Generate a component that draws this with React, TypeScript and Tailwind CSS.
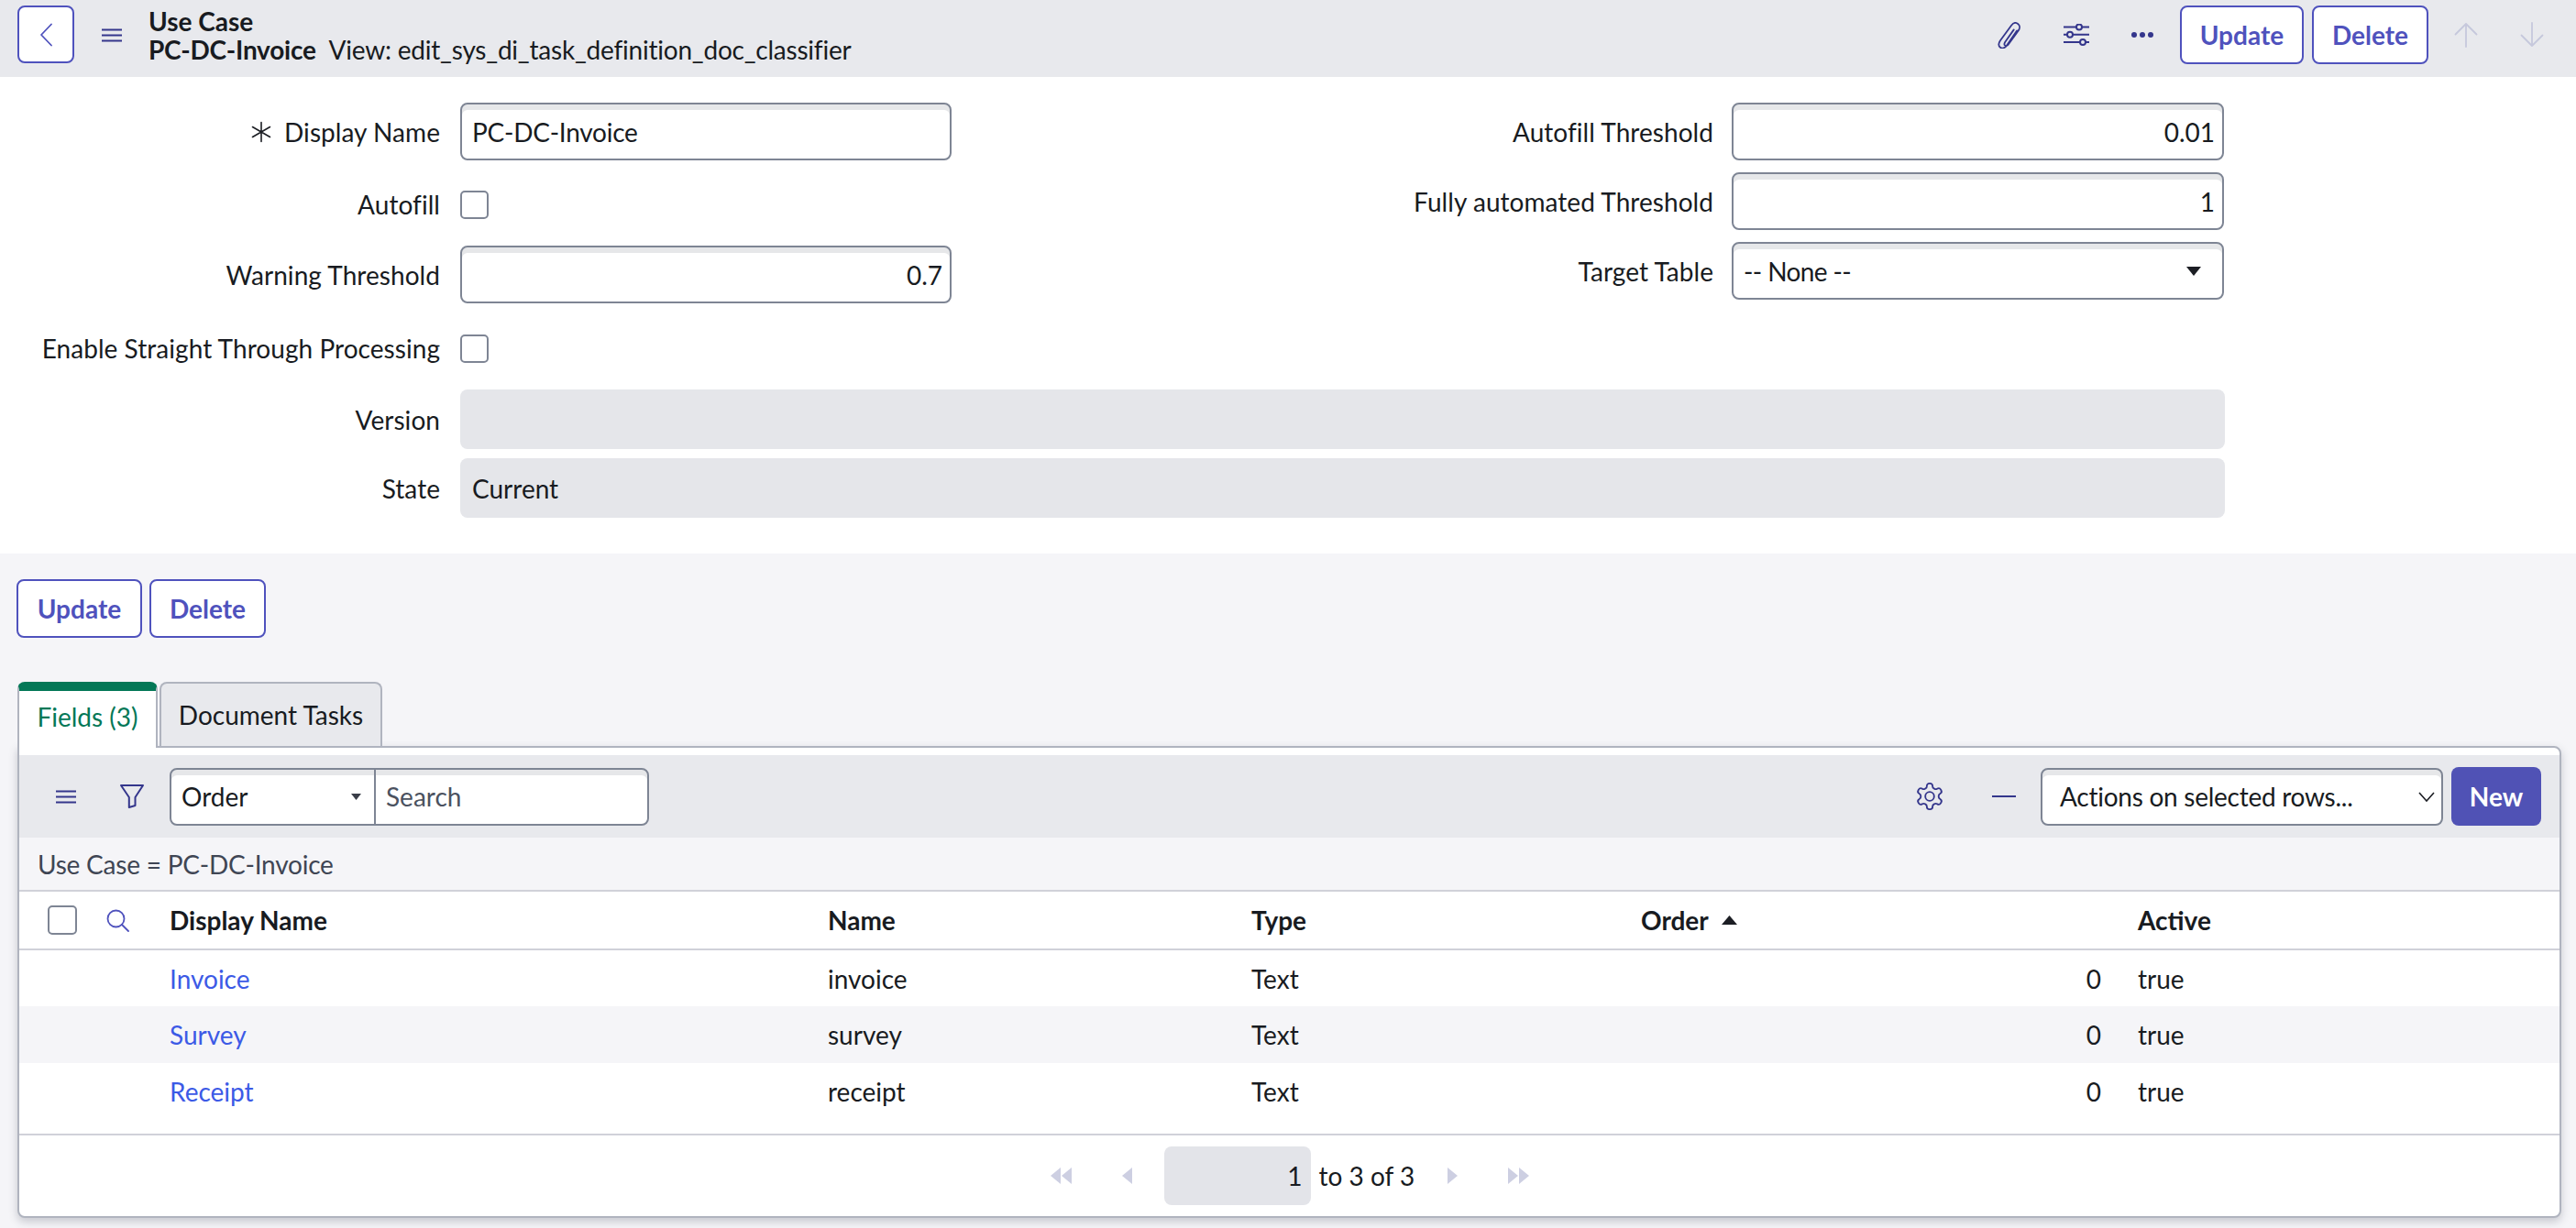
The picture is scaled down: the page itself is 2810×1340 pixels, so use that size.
import React from "react";

const Clip = () => (
  <svg width="26" height="29" viewBox="3 0.5 21.5 26" fill="none" stroke="#34368c" strokeWidth="1.6" strokeLinecap="round" strokeLinejoin="round">
    <path d="M21 9 L11 23.5 C9.3 26 6.6 26.8 4.8 25.4 C3 24 3 21.3 4.6 18.8 L15.6 3.8 C17.4 1.4 20 0.8 22 2.2 C24 3.6 24.2 6.3 22.6 8.7 L12.5 22.6 C11.6 23.9 10.3 24.2 9.4 23.5 C8.5 22.8 8.6 21.6 9.4 20.3 L18 8" />
  </svg>
);
const Sliders = () => (
  <svg width="28" height="24" viewBox="0 0 28 24" fill="none" stroke="#34368c" strokeWidth="2">
    <path d="M0 3.5 H14 M20 3.5 H28 M0 11.7 H4 M10 11.7 H28 M0 20 H18 M24 20 H28" />
    <circle cx="17" cy="3.5" r="3" />
    <circle cx="7" cy="11.7" r="3" />
    <circle cx="21" cy="20" r="3" />
  </svg>
);
const Dots = () => (
  <svg width="26" height="8" viewBox="0 0 26 8" fill="#34368c">
    <circle cx="4" cy="4" r="3" />
    <circle cx="13" cy="4" r="3" />
    <circle cx="22" cy="4" r="3" />
  </svg>
);
const Menu = ({ w }: { w: number }) => (
  <svg width={w} height="15" viewBox={`0 0 ${w} 15`} stroke="#34368c" strokeWidth="2">
    <path d={`M0 1.5 H${w} M0 7.5 H${w} M0 13.5 H${w}`} />
  </svg>
);
const Arrow = ({ down }: { down?: boolean }) => (
  <svg width="26" height="28" viewBox="0 0 26 28" fill="none" stroke="#c6c8dc" strokeWidth="1.8" strokeLinecap="round" strokeLinejoin="round">
    {down ? <path d="M13 1 V26 M1.5 14.5 L13 26 L24.5 14.5" /> : <path d="M13 27 V2 M1.5 13.5 L13 2 L24.5 13.5" />}
  </svg>
);
const Filter = () => (
  <svg width="26" height="26" viewBox="0 0 26 26" fill="none" stroke="#34368c" strokeWidth="2" strokeLinejoin="round">
    <path d="M1 1 H25 L16.5 14 V23 L9.8 25 V14 Z" />
  </svg>
);
const Gear = () => (
  <svg width="34" height="34" viewBox="0 0 24 24" fill="none" stroke="#34368c" strokeWidth="1.3" strokeLinecap="round" strokeLinejoin="round">
    <path d="M12.22 2h-.44a2 2 0 0 0-2 2v.18a2 2 0 0 1-1 1.73l-.43.25a2 2 0 0 1-2 0l-.15-.08a2 2 0 0 0-2.73.73l-.22.38a2 2 0 0 0 .73 2.73l.15.1a2 2 0 0 1 1 1.72v.51a2 2 0 0 1-1 1.74l-.15.09a2 2 0 0 0-.73 2.73l.22.38a2 2 0 0 0 2.73.73l.15-.08a2 2 0 0 1 2 0l.43.25a2 2 0 0 1 1 1.73V20a2 2 0 0 0 2 2h.44a2 2 0 0 0 2-2v-.18a2 2 0 0 1 1-1.73l.43-.25a2 2 0 0 1 2 0l.15.08a2 2 0 0 0 2.73-.73l.22-.39a2 2 0 0 0-.73-2.73l-.15-.08a2 2 0 0 1-1-1.74v-.5a2 2 0 0 1 1-1.74l.15-.09a2 2 0 0 0 .73-2.73l-.22-.38a2 2 0 0 0-2.73-.73l-.15.08a2 2 0 0 1-2 0l-.43-.25a2 2 0 0 1-1-1.73V4a2 2 0 0 0-2-2z" />
    <circle cx="12" cy="12" r="3.4" />
  </svg>
);
const Search = () => (
  <svg width="25" height="25" viewBox="0 0 25 25" fill="none" stroke="#4f52bd" strokeWidth="1.8" strokeLinecap="round">
    <circle cx="10.5" cy="10.5" r="9" />
    <path d="M17 17 L24 24" />
  </svg>
);
const Tri = ({ dir, x = 0 }: { dir: "l" | "r"; x?: number }) => (
  <path d={dir === "l" ? `M${x + 11} 0 V18 L${x} 9 Z` : `M${x} 0 V18 L${x + 11} 9 Z`} fill="#cdcfe2" />
);
const Pager = ({ dir, double }: { dir: "l" | "r"; double?: boolean }) => (
  <svg width={double ? 23 : 11} height="18" viewBox={`0 0 ${double ? 23 : 11} 18`}>
    <Tri dir={dir} />
    {double && <Tri dir={dir} x={12} />}
  </svg>
);

const inputBase =
  "h-[63px] border-2 border-[#7e8594] rounded-[8px] bg-white shadow-[inset_0_6px_0_#e6e7e9] flex items-center pt-[1px]";

const Field = ({ value, right, className }: { value: string; right?: boolean; className: string }) => (
  <div className={`${inputBase} ${right ? "justify-end pr-[8px]" : "pl-[11px] tracking-[-0.25px]"} ${className}`}>{value}</div>
);

const Label = ({ children, req }: { children: string; req?: boolean }) => (
  <div className="flex items-center justify-end gap-[13px] whitespace-nowrap tracking-[0.05px]">
    {req && (
      <svg width="24" height="24" viewBox="0 0 24 24" stroke="#1c1e24" strokeWidth="1.6" strokeLinecap="round">
        <path d="M12 1.5 V22.5 M2.5 6.5 L21.5 17.5 M21.5 6.5 L2.5 17.5" />
      </svg>
    )}
    {children}
  </div>
);

const Check = ({ large }: { large?: boolean }) => (
  <div className={`${large ? "w-[32px] h-[32px]" : "w-[31px] h-[31px]"} border-2 border-[#7e8594] rounded-[5px] bg-white`} />
);

const OutlineBtn = ({ label, w }: { label: string; w: string }) => (
  <button className={`${w} h-[64px] border-2 border-[#4f52bd] rounded-[8px] bg-white text-[#4f52bd] font-bold flex items-center justify-center`}>
    {label}
  </button>
);

const cols = "grid grid-cols-[164px_718px_462px_425px_542px_1fr] items-center";

const Row = ({ name, id, h, stripe }: { name: string; id: string; h: string; stripe?: boolean }) => (
  <div className={`${cols} ${h} ${stripe ? "bg-[#f5f5f8]" : ""}`}>
    <div />
    <a className="text-[#3c5ae6]">{name}</a>
    <div>{id}</div>
    <div>Text</div>
    <div className="text-right pr-[40px]">0</div>
    <div>true</div>
  </div>
);

export default function App() {
  return (
    <div className="w-[2810px] h-[1340px] overflow-hidden bg-[#f5f5f8] font-['Lato',sans-serif] text-[28px] leading-[36px] text-[#181b21]">
      {/* Header */}
      <header className="h-[84px] bg-[#e8e9ed] flex items-start pl-[19px] pr-[35px] pt-[6px]">
        <button className="w-[62px] h-[63px] border-2 border-[#4f52bd] rounded-[8px] bg-white flex items-center justify-center shrink-0">
          <svg width="15" height="26" viewBox="0 0 15 26" fill="none" stroke="#4f52bd" strokeWidth="1.8" strokeLinecap="round" strokeLinejoin="round">
            <path d="M13 1.5 L2 13 L13 24.5" />
          </svg>
        </button>
        <div className="ml-[30px] mr-[30px] mt-[25px]">
          <Menu w={22} />
        </div>
        <div className="flex flex-col leading-[31px] mt-[2px] -ml-[1px]">
          <div className="font-bold">Use Case</div>
          <div className="whitespace-nowrap">
            <span className="font-bold tracking-[-0.25px]">PC-DC-Invoice</span>
            <span className="ml-[14px] tracking-[-0.22px]">View: edit_sys_di_task_definition_doc_classifier</span>
          </div>
        </div>
        <div className="ml-auto flex items-center">
          <Clip />
          <div className="ml-[46px]"><Sliders /></div>
          <div className="ml-[45px] mr-[28px]"><Dots /></div>
          <OutlineBtn label="Update" w="w-[135px]" />
          <div className="ml-[9px]"><OutlineBtn label="Delete" w="w-[127px]" /></div>
          <div className="ml-[28px]"><Arrow /></div>
          <div className="ml-[46px]"><Arrow down /></div>
        </div>
      </header>

      {/* Form */}
      <section className="h-[520px] bg-white pt-[28px]">
        <div className="flex h-[297px]">
          <div className="w-[1038px] flex flex-col">
            <div className="grid grid-cols-[480px_1fr] gap-x-[22px] items-center">
              <Label req>Display Name</Label>
              <Field value="PC-DC-Invoice" className="w-[536px]" />
            </div>
            <div className="mt-[33px] h-[31px] leading-[31px] grid grid-cols-[480px_1fr] gap-x-[22px] items-center">
              <Label>Autofill</Label>
              <Check />
            </div>
            <div className="mt-[29px] grid grid-cols-[480px_1fr] gap-x-[22px] items-center">
              <Label>Warning Threshold</Label>
              <Field value="0.7" right className="w-[536px]" />
            </div>
            <div className="mt-[34px] h-[31px] leading-[31px] grid grid-cols-[480px_1fr] gap-x-[22px] items-center">
              <Label>Enable Straight Through Processing</Label>
              <Check />
            </div>
          </div>
          <div className="w-[1388px] flex flex-col gap-[13px]">
            <div className="grid grid-cols-[831px_1fr] gap-x-[20px] items-center">
              <Label>Autofill Threshold</Label>
              <Field value="0.01" right className="w-[537px]" />
            </div>
            <div className="grid grid-cols-[831px_1fr] gap-x-[20px] items-center">
              <Label>Fully automated Threshold</Label>
              <Field value="1" right className="w-[537px]" />
            </div>
            <div className="grid grid-cols-[831px_1fr] gap-x-[20px] items-center">
              <Label>Target Table</Label>
              <div className={`${inputBase} w-[537px] justify-between pl-[11px] pr-[23px]`}>
                <span className="tracking-[-0.6px]">-- None --</span>
                <svg width="16" height="10" viewBox="0 0 16 10"><path d="M0 0 H16 L8 10 Z" fill="#1c1e24" /></svg>
              </div>
            </div>
          </div>
        </div>
        <div className="mt-[16px] flex flex-col gap-[10px]">
          <div className="grid grid-cols-[480px_1925px] gap-x-[22px] items-center">
            <Label>Version</Label>
            <div className="h-[65px] bg-[#e5e6ea] rounded-[8px]" />
          </div>
          <div className="grid grid-cols-[480px_1925px] gap-x-[22px] items-center">
            <Label>State</Label>
            <div className="h-[65px] bg-[#e5e6ea] rounded-[8px] flex items-center px-[13px]">Current</div>
          </div>
        </div>
      </section>

      {/* Bottom buttons */}
      <div className="pl-[18px] pt-[28px] flex gap-[8px]">
        <OutlineBtn label="Update" w="w-[137px]" />
        <OutlineBtn label="Delete" w="w-[127px]" />
      </div>

      {/* Tabs */}
      <div className="mt-[48px] ml-[19px] flex items-start h-[70px] relative z-10">
        <div className="w-[153px] h-[72px] rounded-t-[8px] bg-white border-t-[10px] border-[#047857] text-[#047857] flex items-center justify-center pb-[6px] border-x-2 border-x-[#b0b4bf]">
          Fields (3)
        </div>
        <div className="ml-[2px] w-[243px] h-[70px] rounded-t-[8px] bg-[#e8e9ed] border-2 border-[#b0b4bf] border-b-0 flex items-center justify-center">
          Document Tasks
        </div>
      </div>

      {/* Panel */}
      <div className="ml-[19px] w-[2775px] h-[515px] border-2 border-[#b0b4bf] rounded-[8px] rounded-tl-none bg-white shadow-[0_4px_10px_rgba(60,65,85,0.25)] pt-[8px] flex flex-col">
        <div className="h-[90px] bg-[#e8e9ed] flex items-center pl-[40px] pr-[20px] shrink-0">
          <Menu w={22} />
          <div className="ml-[48px] mr-[28px]"><Filter /></div>
          <div className="w-[523px] h-[63px] border-2 border-[#7e8594] rounded-[8px] bg-white shadow-[inset_0_6px_0_#e6e7e9] flex items-center">
            <div className="w-[223px] h-full border-r-2 border-[#7e8594] flex items-center justify-between pl-[11px] pr-[14px] shrink-0">
              <span>Order</span>
              <svg width="11" height="7" viewBox="0 0 11 7"><path d="M0 0 H11 L5.5 7 Z" fill="#3a3e48" /></svg>
            </div>
            <span className="pl-[11px] text-[#4b5260]">Search</span>
          </div>
          <div className="ml-auto"><Gear /></div>
          <div className="ml-[51px] mr-[27px] w-[26px] h-[2px] bg-[#34368c]" />
          <div className="w-[439px] h-[63px] border-2 border-[#7e8594] rounded-[8px] bg-white shadow-[inset_0_6px_0_#e6e7e9] flex items-center justify-between pl-[19px] pr-[7px]">
            <span className="tracking-[-0.26px]">Actions on selected rows...</span>
            <svg width="18" height="11" viewBox="0 0 18 11" fill="none" stroke="#1c1e24" strokeWidth="1.6"><path d="M1 1 L9 10 L17 1" /></svg>
          </div>
          <button className="ml-[9px] w-[98px] h-[64px] rounded-[8px] bg-[#5052b5] text-white font-bold">New</button>
        </div>
        <div className="h-[59px] bg-[#f5f5f8] border-b-2 border-[#d0d1d9] flex items-center pl-[20px] text-[#3f4654] shrink-0 tracking-[-0.22px]">
          Use Case = PC-DC-Invoice
        </div>
        <div className={`${cols} h-[64px] border-b-2 border-[#d0d1d9] font-bold shrink-0`}>
          <div className="flex items-center pl-[31px] gap-[32px]">
            <Check large />
            <Search />
          </div>
          <div>Display Name</div>
          <div>Name</div>
          <div>Type</div>
          <div className="flex items-center gap-[14px]">
            Order
            <svg width="17" height="10" viewBox="0 0 17 10"><path d="M0 10 H17 L8.5 0 Z" fill="#1c1e24" /></svg>
          </div>
          <div>Active</div>
        </div>
        <Row name="Invoice" id="invoice" h="h-[61px]" />
        <Row name="Survey" id="survey" h="h-[62px]" stripe />
        <Row name="Receipt" id="receipt" h="h-[62px]" />
        <div className="mt-[15px] flex-1 border-t-2 border-[#d0d1d9] flex items-center justify-center">
          <div className="flex items-center">
            <Pager dir="l" double />
            <div className="ml-[55px]"><Pager dir="l" /></div>
            <div className="ml-[35px] w-[160px] h-[64px] rounded-[8px] bg-[#e3e4e9] flex items-center justify-end pr-[9px]">1</div>
            <span className="ml-[9px] w-[104px] whitespace-nowrap">to 3 of 3</span>
            <div className="ml-[36px]"><Pager dir="r" /></div>
            <div className="ml-[55px]"><Pager dir="r" double /></div>
          </div>
        </div>
      </div>
    </div>
  );
}
